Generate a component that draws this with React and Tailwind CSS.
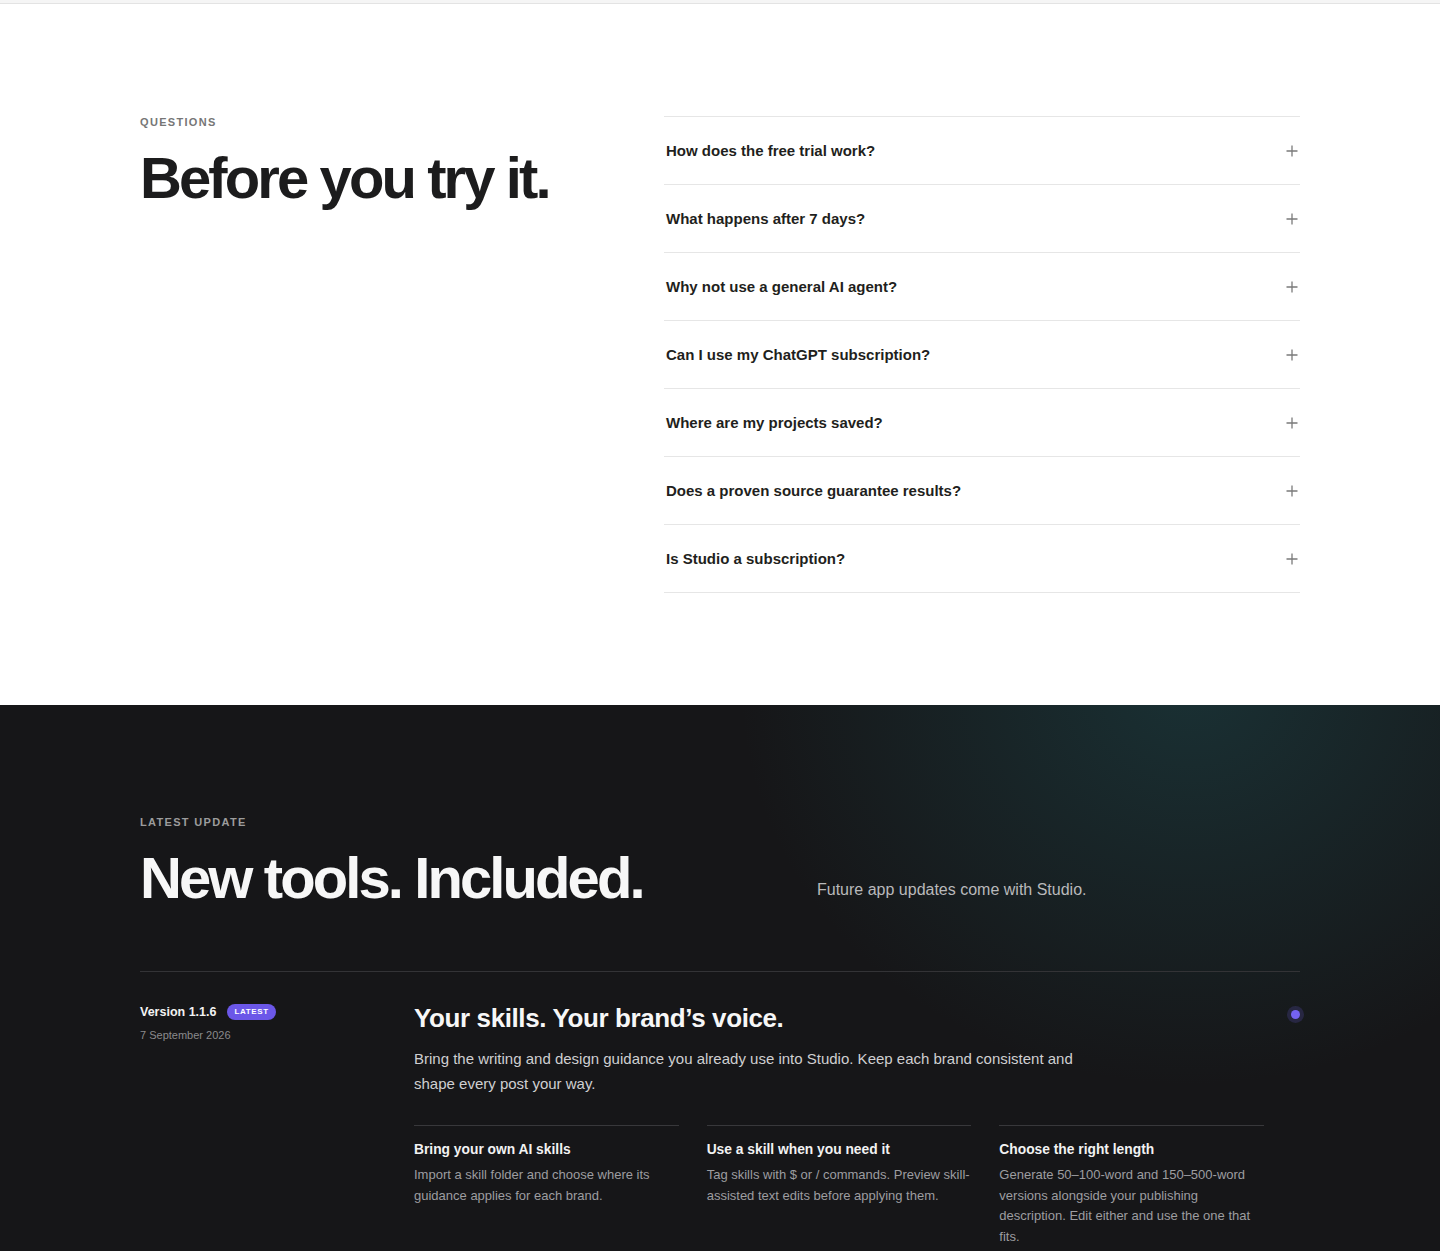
const faqs = [
  "How does the free trial work?",
  "What happens after 7 days?",
  "Why not use a general AI agent?",
  "Can I use my ChatGPT subscription?",
  "Where are my projects saved?",
  "Does a proven source guarantee results?",
  "Is Studio a subscription?",
];

const features = [
  {
    title: "Bring your own AI skills",
    body: "Import a skill folder and choose where its guidance applies for each brand.",
  },
  {
    title: "Use a skill when you need it",
    body: "Tag skills with $ or / commands. Preview skill-assisted text edits before applying them.",
  },
  {
    title: "Choose the right length",
    body: "Generate 50–100-word and 150–500-word versions alongside your publishing description. Edit either and use the one that fits.",
  },
];

const PlusIcon = () => (
  <svg width="12" height="12" viewBox="0 0 12 12" fill="none" stroke="#7a7a7a" strokeWidth="1.3">
    <path d="M6 0.5v11M0.5 6h11" />
  </svg>
);

export default function App() {
  return (
    <div className="min-h-screen bg-white font-['Liberation_Sans',Arial,sans-serif]">
      <div className="h-[4px] bg-[#f5f5f5] border-b border-[#e3e3e3]" />

      {/* FAQ */}
      <section className="py-28">
        <div className="mx-auto w-[1160px] grid grid-cols-[460px_1fr] gap-16">
          <div>
            <p className="text-[11px] font-bold tracking-[0.12em] text-[#767676] leading-none mt-[1px]">QUESTIONS</p>
            <h2 className="mt-[20px] text-[58px] font-bold tracking-[-0.05em] leading-[59px] text-[#1c1c1d]">
              Before you try it.
            </h2>
          </div>
          <div className="border-t border-[#e6e6e6]">
            {faqs.map((q) => (
              <button
                key={q}
                type="button"
                className="w-full h-[68px] flex items-center justify-between pl-[2px] pr-[2px] border-b border-[#e6e6e6] text-left"
              >
                <span className="text-[15px] font-bold text-[#1f1f20] mt-[1px]">{q}</span>
                <PlusIcon />
              </button>
            ))}
          </div>
        </div>
      </section>

      {/* Latest update */}
      <section className="relative overflow-hidden bg-[#161618] pt-28 pb-[5px]">
        <div className="pointer-events-none absolute right-[-200px] top-[-420px] w-[900px] h-[800px] bg-[radial-gradient(closest-side,rgba(30,80,85,0.45),rgba(22,22,24,0))]" />
        <div className="relative mx-auto w-[1160px]">
          <div className="flex items-end">
            <div className="w-[677px]">
              <p className="text-[11px] font-bold tracking-[0.12em] text-[#9c9c9c] leading-none">LATEST UPDATE</p>
              <h2 className="mt-[20px] text-[58px] font-bold tracking-[-0.05em] leading-[59px] text-[#f7f7f7]">
                New tools. Included.
              </h2>
            </div>
            <p className="mb-[5px] text-[16px] text-[#b9b9bb]">Future app updates come with Studio.</p>
          </div>

          <div className="mt-[64px] border-t border-[#333336] pt-[31px] grid grid-cols-[274px_1fr]">
            <div>
              <div className="flex items-center gap-[11px]">
                <span className="text-[12.5px] font-bold text-[#f2f2f2]">Version 1.1.6</span>
                <span className="rounded-full bg-[#6b57e8] px-[7px] py-[4px] text-[8px] font-bold tracking-[0.08em] text-white leading-none">
                  LATEST
                </span>
              </div>
              <p className="mt-[5px] text-[11px] text-[#8a8a8c]">7 September 2026</p>
            </div>
            <div className="flex justify-between">
              <div className="w-[850px]">
                <h3 className="text-[26px] font-bold tracking-[-0.015em] leading-[1.2] text-[#f7f7f7]">
                  Your skills. Your brand’s voice.
                </h3>
                <p className="mt-[12px] max-w-[670px] text-[15px] leading-[25px] text-[#cfcfd1]">
                  Bring the writing and design guidance you already use into Studio. Keep each brand consistent and shape every post your way.
                </p>
                <div className="mt-[29px] grid grid-cols-3 gap-[28px]">
                  {features.map((f) => (
                    <div key={f.title} className="border-t border-[#38383b] pt-[14px]">
                      <h4 className="text-[13.8px] font-bold text-[#f2f2f2]">{f.title}</h4>
                      <p className="mt-[4px] text-[13px] leading-[20.7px] text-[#9d9da0]">{f.body}</p>
                    </div>
                  ))}
                </div>
              </div>
              <div className="pt-[7px]">
                <span className="block w-[9px] h-[9px] rounded-full bg-[#7462f2] shadow-[0_0_0_4px_rgba(116,98,242,0.18)]" />
              </div>
            </div>
          </div>
        </div>
      </section>
    </div>
  );
}
